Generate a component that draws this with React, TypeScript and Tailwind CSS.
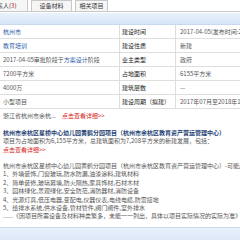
const rows = [
  { left: <span className="text-[#2a5caa]">杭州市</span>, label: "建设时间", value: "2017-04-05(发布时间:2017-04-05)" },
  { left: <span className="text-[#2a5caa]">教育培训</span>, label: "建设性质", value: "新建" },
  {
    left: (
      <span>
        2017-04-05审批阶段于<span className="text-[#2a5caa]">方案设计</span>阶段
      </span>
    ),
    label: "业主类型",
    value: "政府",
  },
  { left: "7200平方米", label: "占地面积", value: "6155平方米" },
  { left: "4000万", label: "建筑层数", value: "—" },
  { left: "小型项目", label: "建设周期（拟建）", value: "2017年07月至2018年12月" },
]

const items = [
  "1、外墙装饰,门窗玻璃,防水防漏,油漆涂料,建筑材料",
  "2、简单装修,玻璃幕墙,防火隔热,家具饰材,石材木材",
  "3、园林绿化,景观绿化,安全防范,消防器材,消防设备",
  "4、光源灯具,低压电器,变配电,仪器仪表,电线电缆,防雷接地",
  "5、给排水系统,供水设备,管材管件,阀门阀件,室外排水",
]

const App = () => {
  return (
    <div className="w-[240px] h-[240px] overflow-hidden bg-white text-[6px] leading-none text-[#555] font-['Noto_Sans_CJK_SC',sans-serif]">
      {/* tabs */}
      <div className="flex h-[12px] border-b border-[#c8c8c8] whitespace-nowrap">
        <div className="flex items-center w-[28px] pl-0 border-r border-[#c8c8c8] bg-[#f6f6f6] overflow-hidden">
          <span className="-ml-[3px] text-[#333]">
            系人(<span className="text-[#d00]">3</span>)
          </span>
        </div>
        <div className="flex items-center justify-center w-[41px] ml-[3px] border-x border-t border-[#c8c8c8] bg-[#f6f6f6] text-[#333]">
          设备材料
        </div>
        <div className="flex items-center justify-center w-[33px] ml-[3px] border-x border-t border-[#c8c8c8] bg-[#f6f6f6] text-[#333]">
          相关项目
        </div>
      </div>

      {/* header band */}
      <div className="mt-[1px] h-[12px] bg-gradient-to-b from-[#eaf2fc] to-[#d6e6f7] border-b border-[#c6d9ee]" />

      {/* table */}
      <div className="whitespace-nowrap">
        {rows.map((r, i) => (
          <div key={i} className="grid grid-cols-[120px_56px_1fr] h-[14px] border-b border-[#dedede]">
            <div className="flex items-center pl-[3px] border-r border-[#dedede] overflow-hidden">{r.left}</div>
            <div className="flex items-center pl-[2px] border-r border-[#dedede] text-[#222] overflow-hidden">{r.label}</div>
            <div className="flex items-center pl-[4px] overflow-hidden">{r.value}</div>
          </div>
        ))}
        <div className="flex items-center h-[13px] pl-[3px] gap-[6px]">
          <span>浙江省杭州市余杭...</span>
          <span className="text-[#d41a1a]">点击查看详细&gt;&gt;</span>
        </div>
      </div>

      {/* project summary */}
      <div className="pl-[3px] pt-[7px] whitespace-nowrap">
        <div className="font-bold text-[#1d3f73] leading-[8px]">
          杭州市余杭区星桥中心幼儿园黄鹤分园项目（杭州市余杭区教育资产营运管理中心）
        </div>
        <div className="leading-[8px]">项目为占地面积为6,155平方米，总建筑面积为7,208平方米的新建发展，包括：</div>
        <div className="leading-[9px] text-[#d41a1a]">点击查看详细&gt;&gt;</div>
      </div>

      {/* materials */}
      <div className="pl-[3px] pt-[8px] whitespace-nowrap leading-[8.4px]">
        <div>杭州市余杭区星桥中心幼儿园黄鹤分园项目（杭州市余杭区教育资产营运管理中心）-可能用的到的材料</div>
        {items.map((t) => (
          <div key={t}>{t}</div>
        ))}
        <div>......《因项目所需设备及材料种类繁多，未能一一列出，具体以项目实际情况的实际为准》</div>
      </div>

      {/* bottom band */}
      <div className="mt-[6px] h-[14px] bg-gradient-to-b from-[#e8f1fb] to-[#dbe8f6] border-t border-[#c6d9ee]" />
    </div>
  )
}

export default App
